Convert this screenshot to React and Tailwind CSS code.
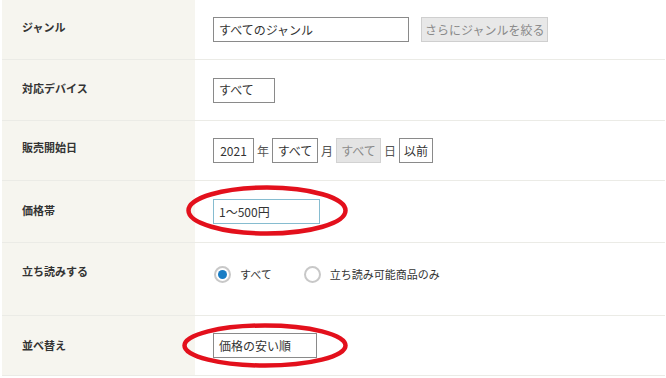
import React from 'react'

const font = { fontFamily: '"Noto Sans CJK JP", "Noto Sans", sans-serif' }

const tones = {
  plain: 'border-[#8a8a8a] bg-white text-[#333]',
  focus: 'border-[#86bcd0] bg-white text-[#333]',
  disabled: 'border-[#d2d2d2] bg-[#e4e4e4] text-[#8a8a8a]',
}

const Box = ({ children, tone = 'plain', className = '' }) => (
  <div
    className={`shrink-0 whitespace-nowrap h-[25px] flex items-center border text-[12px] leading-none ${tones[tone]} ${className}`}
  >
    {children}
  </div>
)

// red hand-drawn style ring used as annotation over inputs
const Ellipse = ({ w, h, className }) => (
  <svg
    className={`absolute pointer-events-none ${className}`}
    width={w}
    height={h}
    viewBox={`0 0 ${w} ${h}`}
    fill="none"
  >
    <ellipse cx={w / 2} cy={h / 2} rx={w / 2 - 2.5} ry={h / 2 - 2.5} stroke="#e3101c" strokeWidth="4.5" />
  </svg>
)

const Row = ({ label, height, labelOffset = '', gap = 'gap-[5px]', children }) => (
  <div className={`grid grid-cols-[193px_1fr] border-b border-[#ebebe6] ${height}`}>
    <div className={`bg-[#f6f5ef] flex items-center pl-[20px] ${labelOffset}`}>
      <span className="text-[11px] font-bold text-[#333]">{label}</span>
    </div>
    <div className={`relative flex items-center pl-[18px] ${gap}`}>{children}</div>
  </div>
)

const Radio = ({ checked, label }) => (
  <label className="flex items-center gap-[9px] text-[11px] text-[#333] whitespace-nowrap">
    <span className="w-[17px] h-[17px] rounded-full border-2 border-[#c8c8c8] bg-white flex items-center justify-center">
      {checked && <span className="w-[9px] h-[9px] rounded-full bg-[#1a7dc4]" />}
    </span>
    {label}
  </label>
)

export default function App() {
  return (
    <div className="w-[666px] h-[378px] bg-white overflow-hidden pl-[2px] pr-[1px]" style={font}>
      <Row label="ジャンル" height="h-[60px]" labelOffset="pb-[4px]">
        <Box className="w-[196px] px-[5px]">すべてのジャンル</Box>
        <button className="shrink-0 whitespace-nowrap ml-[7px] h-[25px] px-[3px] border border-[#cfcfcf] bg-[#e8e8e8] text-[12px] text-[#8a8a8a] leading-none">
          さらにジャンルを絞る
        </button>
      </Row>

      <Row label="対応デバイス" height="h-[61px]" labelOffset="pb-[4px]">
        <Box className="w-[62px] px-[5px]">すべて</Box>
      </Row>

      <Row label="販売開始日" height="h-[60px]" labelOffset="pb-[6px]" gap="gap-[3px]">
        <Box className="w-[41px] justify-center">2021</Box>
        <span className="text-[12px] text-[#555]">年</span>
        <Box className="w-[46px] justify-center">すべて</Box>
        <span className="text-[12px] text-[#555]">月</span>
        <Box tone="disabled" className="w-[45px] justify-center">
          すべて
        </Box>
        <span className="text-[12px] text-[#555]">日</span>
        <Box className="w-[34px] justify-center">以前</Box>
      </Row>

      <Row label="価格帯" height="h-[62px]" labelOffset="pb-[2px]">
        <Box tone="focus" className="w-[107px] px-[5px]">1～500円</Box>
        <Ellipse w={162} h={51} className="left-[-9px] top-[4px]" />
      </Row>

      <Row label="立ち読みする" height="h-[73px]" labelOffset="pb-[16px]">
        <div className="flex items-center gap-[32px] pb-[10px] pl-[1px]">
          <Radio checked label="すべて" />
          <Radio label="立ち読み可能商品のみ" />
        </div>
      </Row>

      <Row label="並べ替え" height="h-[60px]">
        <Box className="w-[104px] px-[5px]">価格の安い順</Box>
        <Ellipse w={166} h={45} className="left-[-13px] top-[7px]" />
      </Row>
    </div>
  )
}
